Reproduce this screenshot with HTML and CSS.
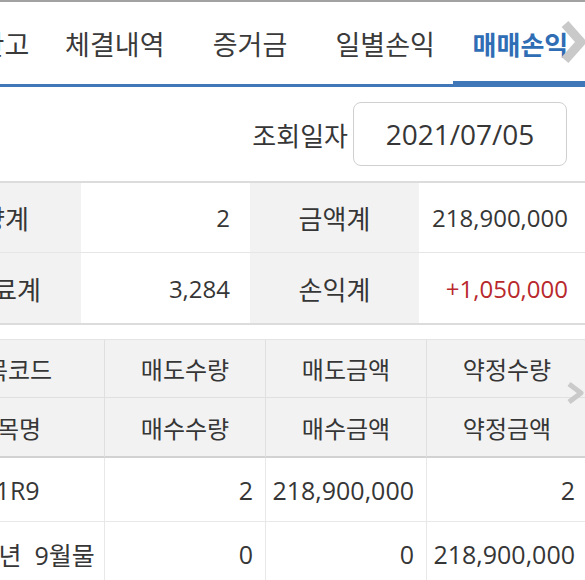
FILE: index.html
```html
<!DOCTYPE html>
<html lang="ko">
<head>
    <meta charset="UTF-8">
    <meta name="viewport" content="width=device-width, initial-scale=1.0">
    <title>매매손익</title>
    <link rel="stylesheet" href="styles.css">
</head>
<body>
    <div class="page">
        <div class="tabs">
            <div class="tab">미결잔고</div>
            <div class="tab">체결내역</div>
            <div class="tab">증거금</div>
            <div class="tab">일별손익</div>
            <div class="tab active">매매손익</div>
        </div>

        <div class="search-row">
            <span class="search-label">조회일자</span>
            <div class="date-box">2021/07/05</div>
        </div>

        <div class="summary">
            <div class="sum-label first">수량계</div>
            <div class="sum-value">2</div>
            <div class="sum-label">금액계</div>
            <div class="sum-value">218,900,000</div>
            <div class="sum-label first">수수료계</div>
            <div class="sum-value">3,284</div>
            <div class="sum-label">손익계</div>
            <div class="sum-value plus">+1,050,000</div>
        </div>

        <div class="grid">
            <div class="head">종목코드</div>
            <div class="head">매도수량</div>
            <div class="head">매도금액</div>
            <div class="head">약정수량</div>
            <div class="head head-last">종목명</div>
            <div class="head head-last">매수수량</div>
            <div class="head head-last">매수금액</div>
            <div class="head head-last">약정금액</div>

            <div class="cell left">KR4101R9</div>
            <div class="cell">2</div>
            <div class="cell">218,900,000</div>
            <div class="cell">2</div>
            <div class="cell left">F 2021년&nbsp; 9월물</div>
            <div class="cell">0</div>
            <div class="cell">0</div>
            <div class="cell">218,900,000</div>
        </div>
    </div>

    <svg class="arrow arrow-tabs" width="30" height="46" viewBox="0 0 30 46">
        <polyline points="6,5 22,23 6,41" fill="none" stroke="#c9c9c9" stroke-width="9" stroke-linejoin="round"/>
    </svg>
    <svg class="arrow arrow-grid" width="20" height="24" viewBox="0 0 20 24">
        <polyline points="3,3 15,12 3,21" fill="none" stroke="#cacaca" stroke-width="5" stroke-linejoin="round"/>
    </svg>
</body>
</html>
```

FILE: styles.css
```css
* {
    margin: 0;
    padding: 0;
    box-sizing: border-box;
}

body {
    font-family: "Open Sans", "Noto Sans CJK KR", sans-serif;
    color: #363636;
    background: #ffffff;
    overflow: hidden;
    height: 580px;
}

.page {
    width: 676px;
    margin-left: -88px;
}

.tabs {
    display: flex;
    border-top: 2px solid #a2a2a2;
    border-bottom: 3px solid #3f77b9;
}

.tab {
    flex: 1;
    height: 82px;
    display: flex;
    align-items: center;
    justify-content: center;
    font-family: "Noto Sans CJK KR", sans-serif;
    font-size: 27px;
    color: #3a3a3a;
}

.tab.active {
    color: #2f6db5;
    font-weight: 700;
    font-size: 26px;
    box-shadow: inset 0 -3px 0 #3f77b9;
}

.search-row {
    display: flex;
    justify-content: flex-end;
    align-items: center;
    gap: 5px;
    padding: 15px 21px 15px 0;
}

.search-label {
    font-family: "Noto Sans CJK KR", sans-serif;
    font-size: 26px;
}

.date-box {
    width: 214px;
    height: 64px;
    border: 1px solid #d0d0d0;
    border-radius: 8px;
    display: flex;
    align-items: center;
    justify-content: center;
    font-size: 28px;
}

.summary {
    display: grid;
    grid-template-columns: repeat(4, 1fr);
    border-top: 2px solid #dcdcdc;
    border-bottom: 2px solid #dcdcdc;
}

.sum-label,
.sum-value {
    height: 70px;
    display: flex;
    align-items: center;
}

.summary > div:nth-child(-n+4) {
    border-bottom: 1px solid #e6e6e6;
}

.sum-label {
    justify-content: center;
    background: #f2f2f2;
    font-family: "Noto Sans CJK KR", sans-serif;
    font-size: 26px;
}

.sum-label.first {
    padding-right: 7px;
}

.sum-value {
    justify-content: flex-end;
    padding-right: 20px;
    font-size: 24px;
}

.plus {
    color: #b8282d;
}

.grid {
    display: grid;
    grid-template-columns: 193px repeat(3, 161px);
    margin-top: 14px;
    border-top: 1px solid #e4e4e4;
}

.head {
    height: 58px;
    display: flex;
    align-items: center;
    justify-content: center;
    background: #f2f2f2;
    border-right: 1px solid #e0e0e0;
    border-bottom: 1px solid #e0e0e0;
    font-family: "Noto Sans CJK KR", sans-serif;
    font-size: 24px;
}

.head-last {
    height: 60px;
    border-bottom: 2px solid #d2d2d2;
}

.cell {
    height: 64px;
    display: flex;
    align-items: center;
    justify-content: flex-end;
    padding: 0 12px;
    border-right: 1px solid #e8e8e8;
    border-bottom: 1px solid #e8e8e8;
    font-size: 25px;
    white-space: nowrap;
}

.cell.left {
    justify-content: flex-start;
    padding-left: 10px;
}

.arrow {
    position: absolute;
}

.arrow-tabs {
    left: 559px;
    top: 19px;
}

.arrow-grid {
    left: 566px;
    top: 381px;
}
```
